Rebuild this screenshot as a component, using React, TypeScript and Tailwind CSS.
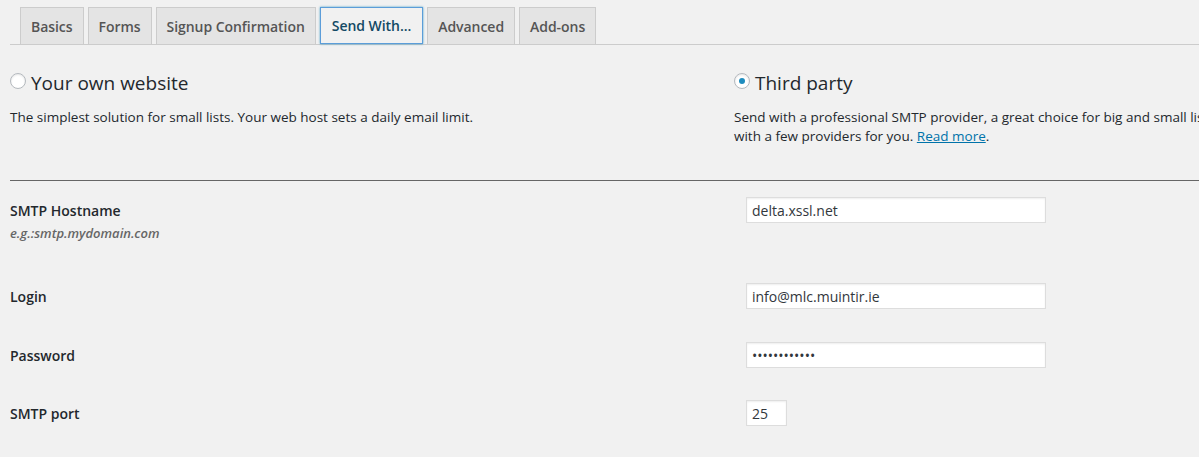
import React from "react";

const tabs = ["Basics", "Forms", "Signup Confirmation", "Send With...", "Advanced", "Add-ons"];

function Radio({ checked }: { checked?: boolean }) {
  return (
    <span className="flex h-[16px] w-[16px] shrink-0 items-center justify-center rounded-full border border-[#b4b9be] bg-white shadow-[inset_0_1px_2px_rgba(0,0,0,0.1)]">
      {checked && <span className="h-[6px] w-[6px] rounded-full bg-[#1e8cbe]" />}
    </span>
  );
}

function Field({ value, type = "text", w = "w-[300px]" }: { value: string; type?: string; w?: string }) {
  return (
    <input
      type={type}
      readOnly
      defaultValue={value}
      className={`${w} h-[26px] border border-[#ddd] bg-white px-[5px] text-[14px] text-[#32373c] shadow-[inset_0_1px_2px_rgba(0,0,0,0.07)] outline-none`}
    />
  );
}

export default function App() {
  return (
    <div
      className="min-h-[457px] w-full overflow-hidden bg-[#f1f1f1] pl-[10px] text-[#23282d]"
      style={{ fontFamily: '"Open Sans", "Noto Sans", sans-serif' }}
    >
      {/* tabs */}
      <div className="mt-[7px] flex gap-[4px] border-b border-[#ccc] pl-[10px]">
        {tabs.map((t) => {
          const active = t === "Send With...";
          return (
            <div
              key={t}
              className={
                active
                  ? "-mb-px flex h-[37px] items-center border border-[#5b9dd9] bg-[#f1f1f1] px-[11px] text-[14px] font-semibold tracking-[-0.05px] text-[#124964] shadow-[0_0_2px_rgba(30,140,190,0.8)]"
                  : "flex h-[37px] items-center border border-b-0 border-[#ccc] bg-[#e4e4e4] px-[10px] text-[14px] font-semibold tracking-[-0.05px] text-[#555]"
              }
            >
              {t}
            </div>
          );
        })}
      </div>

      {/* options */}
      <div className="mt-[28px] flex">
        <div className="w-[724px] shrink-0">
          <div className="flex items-start gap-[5px]">
            <Radio />
            <span className="-mt-[3px] text-[19px] leading-[26px] text-[#23282d]">Your own website</span>
          </div>
          <p className="mt-[12px] text-[13.5px] leading-[19px]">
            The simplest solution for small lists. Your web host sets a daily email limit.
          </p>
        </div>
        <div className="shrink-0">
          <div className="flex items-start gap-[5px]">
            <Radio checked />
            <span className="-mt-[3px] text-[19px] leading-[26px] text-[#23282d]">Third party</span>
          </div>
          <p className="mt-[12px] whitespace-nowrap text-[13.5px] leading-[19px]">
            Send with a professional SMTP provider, a great choice for big and small lists. We've negotiated promotional offers
            <br />
            with a few providers for you.{" "}
            <a className="text-[#0073aa] underline" href="#">
              Read more
            </a>
            .
          </p>
        </div>
      </div>

      <div className="mt-[34px] border-t border-[#666]" />

      {/* form */}
      <div className="grid grid-cols-[736px_1fr]">
        <div className="h-[86px] pt-[16px]">
          <div className="flex h-[26px] items-center text-[14px] font-semibold">SMTP Hostname</div>
          <div className="text-[13px] font-semibold italic leading-[20px] text-[#666]">e.g.:smtp.mydomain.com</div>
        </div>
        <div className="pt-[16px]">
          <Field value="delta.xssl.net" />
        </div>

        <div className="h-[59px] pt-[16px]">
          <div className="flex h-[26px] items-center text-[14px] font-semibold">Login</div>
        </div>
        <div className="pt-[16px]">
          <Field value="info@mlc.muintir.ie" />
        </div>

        <div className="h-[58px] pt-[16px]">
          <div className="flex h-[26px] items-center text-[14px] font-semibold">Password</div>
        </div>
        <div className="pt-[16px]">
          <Field value="passwordxxxx" type="password" />
        </div>

        <div className="h-[59px] pt-[16px]">
          <div className="flex h-[26px] items-center text-[14px] font-semibold">SMTP port</div>
        </div>
        <div className="pt-[16px]">
          <Field value="25" w="w-[41px]" />
        </div>
      </div>
    </div>
  );
}
